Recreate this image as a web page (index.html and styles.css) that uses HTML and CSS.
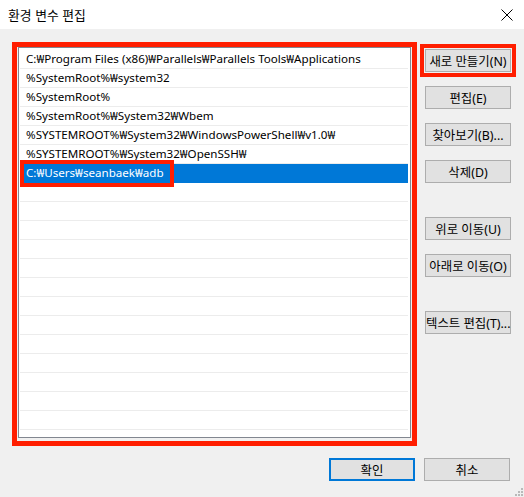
FILE: index.html
```html
<!DOCTYPE html>
<html lang="ko">
<head>
<meta charset="utf-8">
<title>환경 변수 편집</title>
<link rel="stylesheet" href="styles.css">
</head>
<body>
<div class="dialog">
  <div class="titlebar">
    <span class="title">환경 변수 편집</span>
    <svg class="close" width="12" height="12" viewBox="0 0 12 12"><path d="M0.5 0.5L11.5 11.5M11.5 0.5L0.5 11.5" stroke="#000" stroke-width="1" fill="none"/></svg>
  </div>
  <div class="main">
    <div class="listwrap">
      <div class="listbox">
        <div class="row">C:₩Program Files (x86)₩Parallels₩Parallels Tools₩Applications</div>
        <div class="row">%SystemRoot%₩system32</div>
        <div class="row">%SystemRoot%</div>
        <div class="row">%SystemRoot%₩System32₩Wbem</div>
        <div class="row">%SYSTEMROOT%₩System32₩WindowsPowerShell₩v1.0₩</div>
        <div class="row">%SYSTEMROOT%₩System32₩OpenSSH₩</div>
        <div class="row selected">C:₩Users₩seanbaek₩adb<span class="mark-item"></span></div>
        <div class="row"></div>
        <div class="row"></div>
        <div class="row"></div>
        <div class="row"></div>
        <div class="row"></div>
        <div class="row"></div>
        <div class="row"></div>
        <div class="row"></div>
        <div class="row"></div>
        <div class="row"></div>
        <div class="row"></div>
        <div class="row"></div>
        <div class="row"></div>
      </div>
      <div class="mark-list"></div>
    </div>
    <div class="side">
      <div class="btnwrap"><button class="btn">새로 만들기(N)</button><span class="mark-btn"></span></div>
      <button class="btn">편집(E)</button>
      <button class="btn">찾아보기(B)...</button>
      <button class="btn">삭제(D)</button>
      <button class="btn group">위로 이동(U)</button>
      <button class="btn">아래로 이동(O)</button>
      <button class="btn group">텍스트 편집(T)...</button>
    </div>
  </div>
  <div class="footer">
    <button class="btn default">확인</button>
    <button class="btn">취소</button>
  </div>
  <svg class="grip" width="12" height="12" viewBox="0 0 12 12" fill="#b9b9b9">
    <rect x="9" y="3" width="2" height="2"/>
    <rect x="6" y="6" width="2" height="2"/><rect x="9" y="6" width="2" height="2"/>
    <rect x="3" y="9" width="2" height="2"/><rect x="6" y="9" width="2" height="2"/><rect x="9" y="9" width="2" height="2"/>
  </svg>
</div>
</body>
</html>
```
FILE: styles.css
```css
* { box-sizing: border-box; }
html, body { margin: 0; padding: 0; }
body {
  background: #f0f0f0;
  font-family: "Noto Sans", "Noto Sans CJK KR", sans-serif;
  font-size: 12px;
  color: #000;
}
.dialog {
  position: relative;
  width: 524px;
  height: 497px;
  display: flex;
  flex-direction: column;
}
.titlebar {
  height: 29px;
  background: #fff;
  display: flex;
  align-items: center;
  padding: 0 11px 0 8px;
}
.title { font-family: "Noto Sans CJK KR", sans-serif; font-size: 12.8px; }
.close { margin-left: auto; }
.main {
  display: flex;
  padding: 18px 0 0 18px;
}
.listwrap { position: relative; }
.listbox {
  width: 393px;
  height: 391px;
  background: #fff;
  border: 1px solid #828790;
  padding: 2px 2px 0 1px;
  overflow: hidden;
  font-size: 11.6px;
}
.row {
  position: relative;
  height: 19px;
  line-height: 18px;
  border-bottom: 1px solid #ececec;
  padding-left: 6px;
  white-space: nowrap;
}
.row.selected {
  background: #0078d7;
  color: #fff;
  border-bottom-color: #0078d7;
}
.mark-item {
  position: absolute;
  left: 0;
  top: -4px;
  width: 154px;
  height: 27px;
  border: 4px solid #ff1e00;
}
.mark-list {
  position: absolute;
  left: -6px;
  top: -5px;
  width: 405px;
  height: 404px;
  border: 5px solid #ff1e00;
}
.side {
  display: flex;
  flex-direction: column;
  gap: 14px;
  margin-left: 14px;
  padding-top: 2px;
}
.btn {
  width: 86px;
  height: 23px;
  background: #e1e1e1;
  border: 1px solid #adadad;
  font-family: "Noto Sans", "Noto Sans CJK KR", sans-serif;
  font-size: 12.4px;
  color: #000;
  padding: 0;
  white-space: nowrap;
}
.btn.group { margin-top: 20px; }
.btnwrap { position: relative; width: 86px; height: 23px; }
.mark-btn {
  position: absolute;
  left: -5px;
  top: -5px;
  width: 96px;
  height: 33px;
  border: 4px solid #ff1e00;
}
.footer {
  display: flex;
  justify-content: flex-end;
  gap: 9px;
  padding: 20px 14px 0 0;
}
.btn.default { border: 2px solid #0078d7; }
.grip { position: absolute; right: 0; bottom: 0; }
```
